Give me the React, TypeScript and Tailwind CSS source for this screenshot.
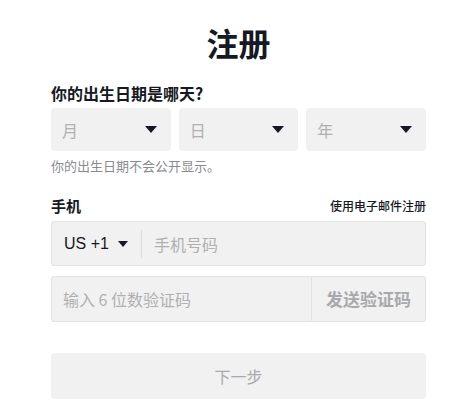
const font = { fontFamily: '"Noto Sans CJK SC", "Noto Sans", sans-serif' };

function Caret({ className = '' }: { className?: string }) {
  return (
    <svg viewBox="0 0 12 7" className={className} fill="currentColor">
      <path d="M0 0h12L6 7z" />
    </svg>
  );
}

function DateSelect({ label }: { label: string }) {
  return (
    <div className="flex h-[43px] items-center justify-between rounded-[4px] bg-[#f1f1f2] pl-[11px] pr-[14px]">
      <span className="text-[16px] text-[#b0b0b0]">{label}</span>
      <Caret className="h-[7px] w-[12px] text-[#161823]" />
    </div>
  );
}

export default function App() {
  return (
    <div className="min-h-[417px] bg-white" style={font}>
      <div className="ml-[51px] w-[375px] pt-[20px]">
        <h1 className="text-center text-[32px] font-bold leading-[44px] text-[#161823]">注册</h1>

        <div className="mt-[18px] text-[16px] font-bold leading-[22px] text-[#161823]">你的出生日期是哪天?</div>
        <div className="mt-[4px] grid grid-cols-3 gap-[8px]">
          <DateSelect label="月" />
          <DateSelect label="日" />
          <DateSelect label="年" />
        </div>
        <p className="mt-[6px] text-[13px] leading-[18px] text-[#8a8b91]">你的出生日期不会公开显示。</p>

        <div className="mt-[21px] flex items-center justify-between">
          <span className="text-[15px] font-bold leading-[20px] text-[#161823]">手机</span>
          <span className="text-[12px] font-medium leading-[18px] text-[#161823]">使用电子邮件注册</span>
        </div>

        <div className="mt-[5px] flex h-[45px] items-center rounded-[3px] border border-[#e3e3e4] bg-[#f1f1f2]">
          <div className="flex items-center gap-[9px] pl-[12px] pr-[13px]">
            <span className="text-[16px] text-[#161823]" style={{ fontFamily: '"Liberation Sans", Arial, sans-serif' }}>US +1</span>
            <Caret className="h-[6px] w-[10px] text-[#161823]" />
          </div>
          <div className="h-[28px] w-px bg-[#dcdcde]" />
          <span className="pl-[12px] text-[16px] text-[#b0b0b0]">手机号码</span>
        </div>

        <div className="mt-[10px] flex h-[46px]">
          <div className="flex flex-1 items-center rounded-l-[3px] border border-[#e3e3e4] bg-[#f1f1f2] pl-[11px]">
            <span className="text-[16px] text-[#b0b0b0]">输入 6 位数验证码</span>
          </div>
          <button className="flex w-[114px] items-center justify-center rounded-r-[3px] border border-l-0 border-[#e3e3e4] bg-[#f1f1f2] text-[17px] font-semibold text-[#a9a9ac]">
            发送验证码
          </button>
        </div>

        <button className="mt-[31px] flex h-[46px] w-full items-center justify-center rounded-[4px] bg-[#f1f1f2] text-[16px] text-[#a9a9ac]">
          下一步
        </button>
      </div>
    </div>
  );
}
